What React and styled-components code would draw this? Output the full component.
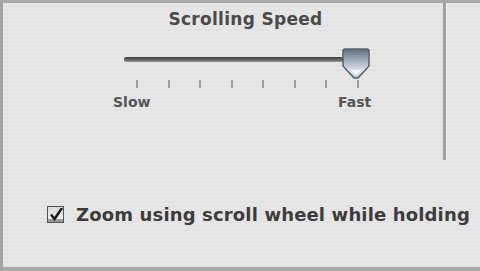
import React from 'react';
import styled, { createGlobalStyle } from 'styled-components';

const Global = createGlobalStyle`
  html, body { margin: 0; padding: 0; background: #e6e6e6; }
  body { font-family: "DejaVu Sans", "Liberation Sans", sans-serif; }
`;

const Frame = styled.div`
  width: 480px;
  height: 271px;
  box-sizing: border-box;
  border-top: 3px solid #a9a9a9;
  border-left: 3px solid #a4a4a4;
  border-bottom: 4px solid #a9a9a9;
  background: repeating-linear-gradient(
    to bottom,
    #e7e7e7 0px,
    #e7e7e7 2px,
    #e3e3e3 2px,
    #e3e3e3 4px
  );
  display: flex;
  flex-direction: column;
  overflow: hidden;
`;

const Top = styled.div`
  display: flex;
  height: 157px;
`;

const Pane = styled.div`
  width: 440px;
  display: flex;
  flex-direction: column;
  align-items: flex-start;
  padding-top: 6px;
`;

const Divider = styled.div`
  width: 3px;
  background: #a2a2a2;
  box-shadow: 1px 0 0 #f4f4f4;
`;

const Title = styled.div`
  align-self: center;
  font-size: 17px;
  line-height: 20px;
  font-weight: bold;
  color: #4a4a4a;
  letter-spacing: 0.3px;
  margin-left: 45px;
`;

const SliderBox = styled.div`
  position: relative;
  width: 250px;
  height: 70px;
  margin-top: 16px;
  margin-left: 121px;
`;

const Track = styled.div`
  position: absolute;
  left: 0;
  top: 12px;
  width: 221px;
  height: 5px;
  border-radius: 2px;
  background: linear-gradient(#3e3e3e, #6a6a6a 60%, #9a9a9a);
`;

const Ticks = styled.div`
  position: absolute;
  left: 12px;
  top: 35px;
  width: 223px;
  display: flex;
  justify-content: space-between;
`;

const Tick = styled.span`
  width: 2px;
  height: 8px;
  background: #a0a0a0;
`;

const Label = styled.span`
  position: absolute;
  top: 49px;
  left: ${p => p.$left}px;
  font-size: 14px;
  font-weight: bold;
  color: #555;
`;

const Thumb = styled.svg`
  position: absolute;
  left: 217px;
  top: 2px;
`;

const Row = styled.label`
  display: flex;
  align-items: center;
  gap: 12px;
  margin-top: 44px;
  padding-left: 44px;
  font-size: 18px;
  line-height: 21px;
  font-weight: bold;
  letter-spacing: 0.15px;
  color: #3c3c3c;
  white-space: nowrap;
`;

const Box = styled.span`
  width: 17px;
  height: 17px;
  box-sizing: border-box;
  border: 1px solid #555;
  background: linear-gradient(#d8d8d8, #f6f6f6);
  box-shadow: inset 0 -3px 0 #9a9a9a;
  display: flex;
  align-items: center;
  justify-content: center;
`;

export default function App() {
  const ticks = Array.from({ length: 8 });
  return (
    <>
      <Global />
      <Frame>
        <Top>
          <Pane>
            <Title>Scrolling Speed</Title>
            <SliderBox>
              <Track />
              <Ticks>
                {ticks.map((_, i) => <Tick key={i} />)}
              </Ticks>
              <Label $left={-11}>Slow</Label>
              <Label $left={214}>Fast</Label>
              <Thumb width="30" height="33" viewBox="0 0 30 33">
                <defs>
                  <linearGradient id="tg" x1="0" y1="0" x2="0" y2="1">
                    <stop offset="0" stopColor="#5f6d7a" />
                    <stop offset="0.45" stopColor="#a9b7c4" />
                    <stop offset="0.75" stopColor="#dfe7ee" />
                    <stop offset="1" stopColor="#b7c2cc" />
                  </linearGradient>
                </defs>
                <path
                  d="M4 2 H26 Q28 2 28 4 V19 L17 31 H13 L2 19 V4 Q2 2 4 2 Z"
                  fill="url(#tg)"
                  stroke="#59626b"
                  strokeWidth="1.5"
                />
                <path d="M10 23 H20 L16 28 H14 Z" fill="#f4f8fb" />
              </Thumb>
            </SliderBox>
          </Pane>
          <Divider />
        </Top>
        <Row>
          <Box>
            <svg width="14" height="14" viewBox="0 0 14 14">
              <path d="M2 6.5 L5.5 11 L13 0" fill="none" stroke="#1e1e1e" strokeWidth="2.6" />
            </svg>
          </Box>
          Zoom using scroll wheel while holding
        </Row>
      </Frame>
    </>
  );
}
